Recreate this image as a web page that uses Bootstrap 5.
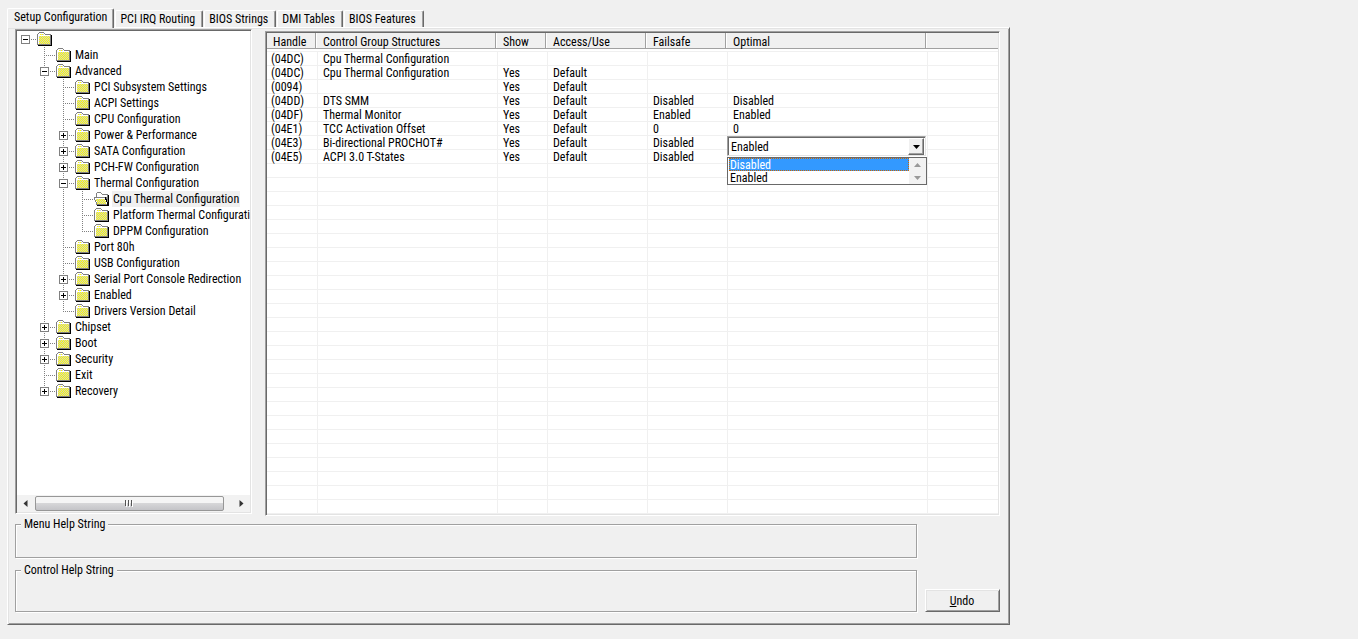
<!DOCTYPE html>
<html lang="en">
<head>
<meta charset="utf-8">
<meta name="viewport" content="width=device-width, initial-scale=1">
<title>Setup Configuration</title>
<link href="https://cdn.jsdelivr.net/npm/bootstrap@5.3.0/dist/css/bootstrap.min.css" rel="stylesheet">
<style>
  :root { --face: #f0f0f0; --lite: #e3e3e3; --mid: #a0a0a0; --dark: #696969; }
  body { background: var(--face); color: #000; font: 12px/14px "Roboto Condensed", Roboto, "Liberation Sans", sans-serif; padding: 8px 7px; }
  button, select { font: inherit; color: #000; }
  .window { max-width: 1003px; }

  /* tabs */
  .tab-btn { background: var(--face); border: 0; border-left: 1px solid #fff; border-top: 1px solid #fff; border-right: 1px solid var(--dark); border-radius: 2px 2px 0 0; box-shadow: inset -1px 0 var(--mid); height: 17px; line-height: 16px; padding: 0 7px 0 4px; margin-right: 1px; white-space: nowrap; }
  .tab-btn.active { height: 20px; padding: 0 6px 3px 6px; margin-bottom: -1px; position: relative; }
  .tab-row { min-height: 19px; }

  .panel { border: 1px solid; border-color: #fff var(--dark) var(--dark) #fff; box-shadow: inset 1px 1px var(--lite), inset -1px -1px var(--mid); padding: 1px 9px 12px 7px; }
  .split { gap: 13px; }
  .sunken { background: #fff; border: 1px solid; border-color: var(--mid) #fff #fff var(--mid); padding: 1px; box-shadow: inset 1px 1px var(--dark), inset -1px -1px var(--lite); overflow: hidden; }

  /* tree */
  .tree-pane { flex: 0 0 237px; margin-bottom: 2px; }
  .tree-view { overflow: hidden; white-space: nowrap; }
  .tree-view ul { list-style: none; margin: 0; padding: 0; }
  .tree-view ul ul { padding-left: 19px; }
  .tree-view ul ul > li { background: repeating-linear-gradient(#808080 0 1px, transparent 1px 2px) 8px 0 / 1px 100% no-repeat; }
  .tree-view ul ul > li:last-child { background-size: 1px 9px; }
  .node { height: 16px; }
  .twig { flex: 0 0 19px; height: 16px; padding: 4px 0 0 4px; background: repeating-linear-gradient(90deg, #808080 0 1px, transparent 1px 2px) 8px 8px / 11px 1px no-repeat; }
  .toggle { display: block; width: 9px; height: 9px; padding: 0; border: 1px solid #808080; background: linear-gradient(#000, #000) 1px 3px / 5px 1px no-repeat #fff; }
  .toggle.closed { background: linear-gradient(#000, #000) 1px 3px / 5px 1px no-repeat, linear-gradient(#000, #000) 3px 1px / 1px 5px no-repeat #fff; }
  .folder { flex: none; margin: 1px 2px 0 1px; }
  .node a { color: #000; text-decoration: none; padding: 0 1px; line-height: 16px; }
  .node a.current { background: var(--face); }

  .hbar { background: #f2f2f2; height: 17px; }
  .hbar button { border: 0; background: none; padding: 0; width: 17px; height: 17px; display: flex; align-items: center; justify-content: center; }
  .thumb { width: 189px; height: 15px; margin-left: 1px; border: 1px solid #979797; border-radius: 2px; background: linear-gradient(#f5f5f5 0 45%, #d6d6d8 50%, #c4c4c8); }

  /* settings grid */
  .grid-pane { margin-top: 2px; min-width: 0; }
  .settings { width: 100%; table-layout: fixed; border-collapse: separate; border-spacing: 0; white-space: nowrap; }
  .settings th { height: 19px; padding: 1px 5px 0 5px; font-weight: 400; line-height: 17px; border-bottom: 1px solid var(--face);
    background: linear-gradient(90deg, var(--mid) 0 1px, #fff 1px) right 1px top 0 / 2px 15px no-repeat, linear-gradient(var(--face) 0 15px, var(--mid) 15px 16px, #fff 16px); }
  .settings th:first-child { padding-left: 6px; }
  .settings th:last-child { background: linear-gradient(var(--face) 0 15px, var(--mid) 15px 16px, #fff 16px); }
  .settings td { height: 14px; padding: 2px 0 0 5px; line-height: 11px; border: solid var(--face); border-width: 0 1px 1px 0; }
  .settings td:first-child { padding-left: 4px; }
  .settings td:last-child { border-right: 0; }

  .combo { position: absolute; left: -1px; top: 0; z-index: 2; width: 200px; line-height: 14px; }
  .combo select { appearance: none; display: block; width: 199px; height: 20px; background: #fff; border: 1px solid; border-color: var(--mid) var(--lite) var(--lite) var(--mid); box-shadow: inset 1px 1px var(--dark); border-radius: 0; padding: 2px 3px 0; outline: 0; }
  .combo-arrow { position: absolute; right: 3px; top: 2px; width: 16px; height: 17px; background: var(--face); border: 1px solid; border-color: #fff var(--dark) var(--dark) #fff; box-shadow: inset -1px -1px var(--mid); pointer-events: none; }
  .choices { background: #fff; border: 1px solid var(--dark); margin-top: 1px; height: 28px; }
  .choices ul { list-style: none; margin: 0; padding: 0 0 0 1px; }
  .choices li { height: 13px; line-height: 15px; padding-left: 1px; }
  .choices li[aria-selected=true] { background: #39f; color: #fff; outline: 1px dotted #c60; outline-offset: -1px; }
  .vbar { width: 17px; background: #f2f2f2; }

  /* lower area */
  .lower { margin-top: 2px; gap: 8px; }
  .group { border: 1px solid var(--mid); box-shadow: inset 1px 1px #fff, 1px 1px #fff; padding: 0 8px; margin: 0; min-width: 0; height: 40px; }
  .group legend { float: none; width: auto; font-size: 12px; line-height: 13px; margin: 0 0 0 -3px; padding: 0 3px; background: var(--face); }
  .group.tall { height: 48px; margin-top: 6px; }
  .undo { width: 75px; height: 23px; background: var(--face); border: 1px solid; border-color: #fff var(--dark) var(--dark) #fff; box-shadow: inset 1px 1px var(--lite), inset -1px -1px var(--mid); padding: 0 1px 0 0; }
</style>
</head>
<body>
<svg width="0" height="0" class="position-absolute" aria-hidden="true">
  <defs>
    <pattern id="dither" width="2" height="2" patternUnits="userSpaceOnUse">
      <path d="M0 0h2v2h-2z" fill="#ccc"/><path d="M1 0h1v1h-1zM0 1h1v1h-1z" fill="#ff0"/>
    </pattern>
    <pattern id="dither-ajar" width="2" height="2" patternUnits="userSpaceOnUse">
      <path d="M0 0h2v2h-2z" fill="#ccc"/><path d="M0 0h1v1h-1zM1 1h1v1h-1z" fill="#ff0"/>
    </pattern>
    <symbol id="folder-shut" viewBox="0 0 16 14">
      <g shape-rendering="crispEdges">
        <path d="M14 3h1v11h-14v-1h13z" fill="#000"/>
        <path d="M2 0h5v1h1v1h6v11h-14v-11h1v-1h1z" fill="#808080"/>
        <path d="M2 1h5v1h1v1h5v9h-12v-10h1z" fill="#fff"/>
        <path d="M3 2h4v1h-4zM2 4h11v8h-11z" fill="url(#dither)"/>
      </g>
    </symbol>
    <symbol id="folder-ajar" viewBox="0 0 16 14">
      <g shape-rendering="crispEdges">
        <path d="M14 3h1v11h-12v-1h11z" fill="#000"/>
        <path d="M3 0h4v1h1v1h6v11h-12v-3h-1v-2h-1v-3h2v-4h1z" fill="#808080"/>
        <path d="M3 1h4v1h1v1h5v2h-10z" fill="#fff"/>
        <path d="M1 6h10v2h1v2h1v2h-10v-2h-1v-2h-1z" fill="#fff"/>
        <path d="M2 7h9v2h1v3h-9v-3h-1z" fill="url(#dither-ajar)"/>
        <path d="M11 5h1v2h1v3h1v3h-1v-3h-1v-2h-1z" fill="#000"/>
      </g>
    </symbol>
  </defs>
</svg>

<main class="window">
  <div class="tab-row d-flex align-items-end" role="tablist">
    <button class="tab-btn active" role="tab" aria-selected="true">Setup Configuration</button>
    <button class="tab-btn" role="tab">PCI IRQ Routing</button>
    <button class="tab-btn" role="tab">BIOS Strings</button>
    <button class="tab-btn" role="tab">DMI Tables</button>
    <button class="tab-btn" role="tab">BIOS Features</button>
  </div>

  <section class="panel">
    <div class="split d-flex">
      <div class="tree-pane sunken d-flex flex-column">
        <nav class="tree-view flex-fill" id="tree" aria-label="Setup menus"></nav>
        <div class="hbar d-flex align-items-center">
          <button aria-label="Scroll left"><svg width="5" height="7"><path d="M4.500 0v7L0.500 3.500z" fill="#333"/></svg></button>
          <div class="thumb d-flex align-items-center justify-content-center"><svg width="9" height="7" shape-rendering="crispEdges"><path d="M0 0h1v6h-1zM3 0h1v6h-1zM6 0h1v6h-1z" fill="#555"/><path d="M1 1h1v6h-1zM4 1h1v6h-1zM7 1h1v6h-1z" fill="#fff"/></svg></div>
          <button class="ms-auto" aria-label="Scroll right"><svg width="5" height="7"><path d="M0.500 0v7L4.500 3.500z" fill="#333"/></svg></button>
        </div>
      </div>

      <div class="grid-pane sunken flex-fill">
        <table class="settings">
          <colgroup><col style="width:51px"><col style="width:180px"><col style="width:50px"><col style="width:100px"><col style="width:80px"><col style="width:200px"><col></colgroup>
          <thead><tr><th>Handle</th><th>Control Group Structures</th><th>Show</th><th>Access/Use</th><th>Failsafe</th><th>Optimal</th><th></th></tr></thead>
          <tbody id="rows"></tbody>
        </table>
      </div>
    </div>

    <div class="lower d-flex align-items-end">
      <div class="flex-fill">
        <fieldset class="group"><legend>Menu Help String</legend></fieldset>
        <fieldset class="group tall"><legend>Control Help String</legend></fieldset>
      </div>
      <button class="undo"><u>U</u>ndo</button>
    </div>
  </section>
</main>

<template id="combo">
  <div class="combo">
    <select aria-label="Optimal value"><option>Disabled</option><option selected>Enabled</option></select>
    <span class="combo-arrow d-flex align-items-center justify-content-center"><svg width="7" height="4"><path d="M0 0h7L3.500 4z"/></svg></span>
    <div class="choices d-flex">
      <ul class="flex-fill" role="listbox" aria-label="Values"><li role="option" aria-selected="true">Disabled</li><li role="option">Enabled</li></ul>
      <div class="vbar d-flex flex-column align-items-center justify-content-around"><svg width="7" height="4"><path d="M0 4h7L3.500 0z" fill="#999"/></svg><svg width="7" height="4"><path d="M0 0h7L3.500 4z" fill="#999"/></svg></div>
    </div>
  </div>
</template>

<script src="https://cdn.jsdelivr.net/npm/bootstrap@5.3.0/dist/js/bootstrap.bundle.min.js"></script>
<script>
  // A node is [label, children]; children === '+' marks a collapsed branch.
  const menu = [['', [
    ['Main'],
    ['Advanced', [
      ['PCI Subsystem Settings'], ['ACPI Settings'], ['CPU Configuration'],
      ['Power & Performance', '+'], ['SATA Configuration', '+'], ['PCH-FW Configuration', '+'],
      ['Thermal Configuration', [['Cpu Thermal Configuration'], ['Platform Thermal Configuration'], ['DPPM Configuration']]],
      ['Port 80h'], ['USB Configuration'],
      ['Serial Port Console Redirection', '+'], ['Enabled', '+'], ['Drivers Version Detail']
    ]],
    ['Chipset', '+'], ['Boot', '+'], ['Security', '+'], ['Exit'], ['Recovery', '+']
  ]]];
  const current = 'Cpu Thermal Configuration';

  function branch(nodes) {
    return '<ul>' + nodes.map(([label, kids]) => {
      const text = label.replace('&', '&amp;');
      const toggle = kids ? `<button class="toggle ${kids === '+' ? 'closed' : ''}" aria-label="Toggle ${text || 'root'}"></button>` : '';
      const on = label === current;
      return `<li><div class="node d-flex"><span class="twig">${toggle}</span>
        <svg class="folder" width="16" height="14" aria-hidden="true"><use href="#folder-${on ? 'ajar' : 'shut'}"/></svg>
        ${text ? `<a href="#"${on ? ' class="current"' : ''}>${text}</a>` : ''}</div>${Array.isArray(kids) ? branch(kids) : ''}</li>`;
    }).join('') + '</ul>';
  }
  document.getElementById('tree').innerHTML = branch(menu);

  const data = [
    ['(04DC)', 'Cpu Thermal Configuration'],
    ['(04DC)', 'Cpu Thermal Configuration', 'Yes', 'Default'],
    ['(0094)', '', 'Yes', 'Default'],
    ['(04DD)', 'DTS SMM', 'Yes', 'Default', 'Disabled', 'Disabled'],
    ['(04DF)', 'Thermal Monitor', 'Yes', 'Default', 'Enabled', 'Enabled'],
    ['(04E1)', 'TCC Activation Offset', 'Yes', 'Default', '0', '0'],
    ['(04E3)', 'Bi-directional PROCHOT#', 'Yes', 'Default', 'Disabled', ''],
    ['(04E5)', 'ACPI 3.0 T-States', 'Yes', 'Default', 'Disabled', '']
  ];
  const body = document.getElementById('rows');
  for (let r = 0; r < 33; r++) {
    const tr = body.insertRow();
    for (let c = 0; c < 7; c++) tr.insertCell().textContent = (data[r] || [])[c] || '';
  }
  const cell = body.rows[6].cells[5];
  cell.classList.add('position-relative');
  cell.append(document.getElementById('combo').content.cloneNode(true));
</script>
</body>
</html>
